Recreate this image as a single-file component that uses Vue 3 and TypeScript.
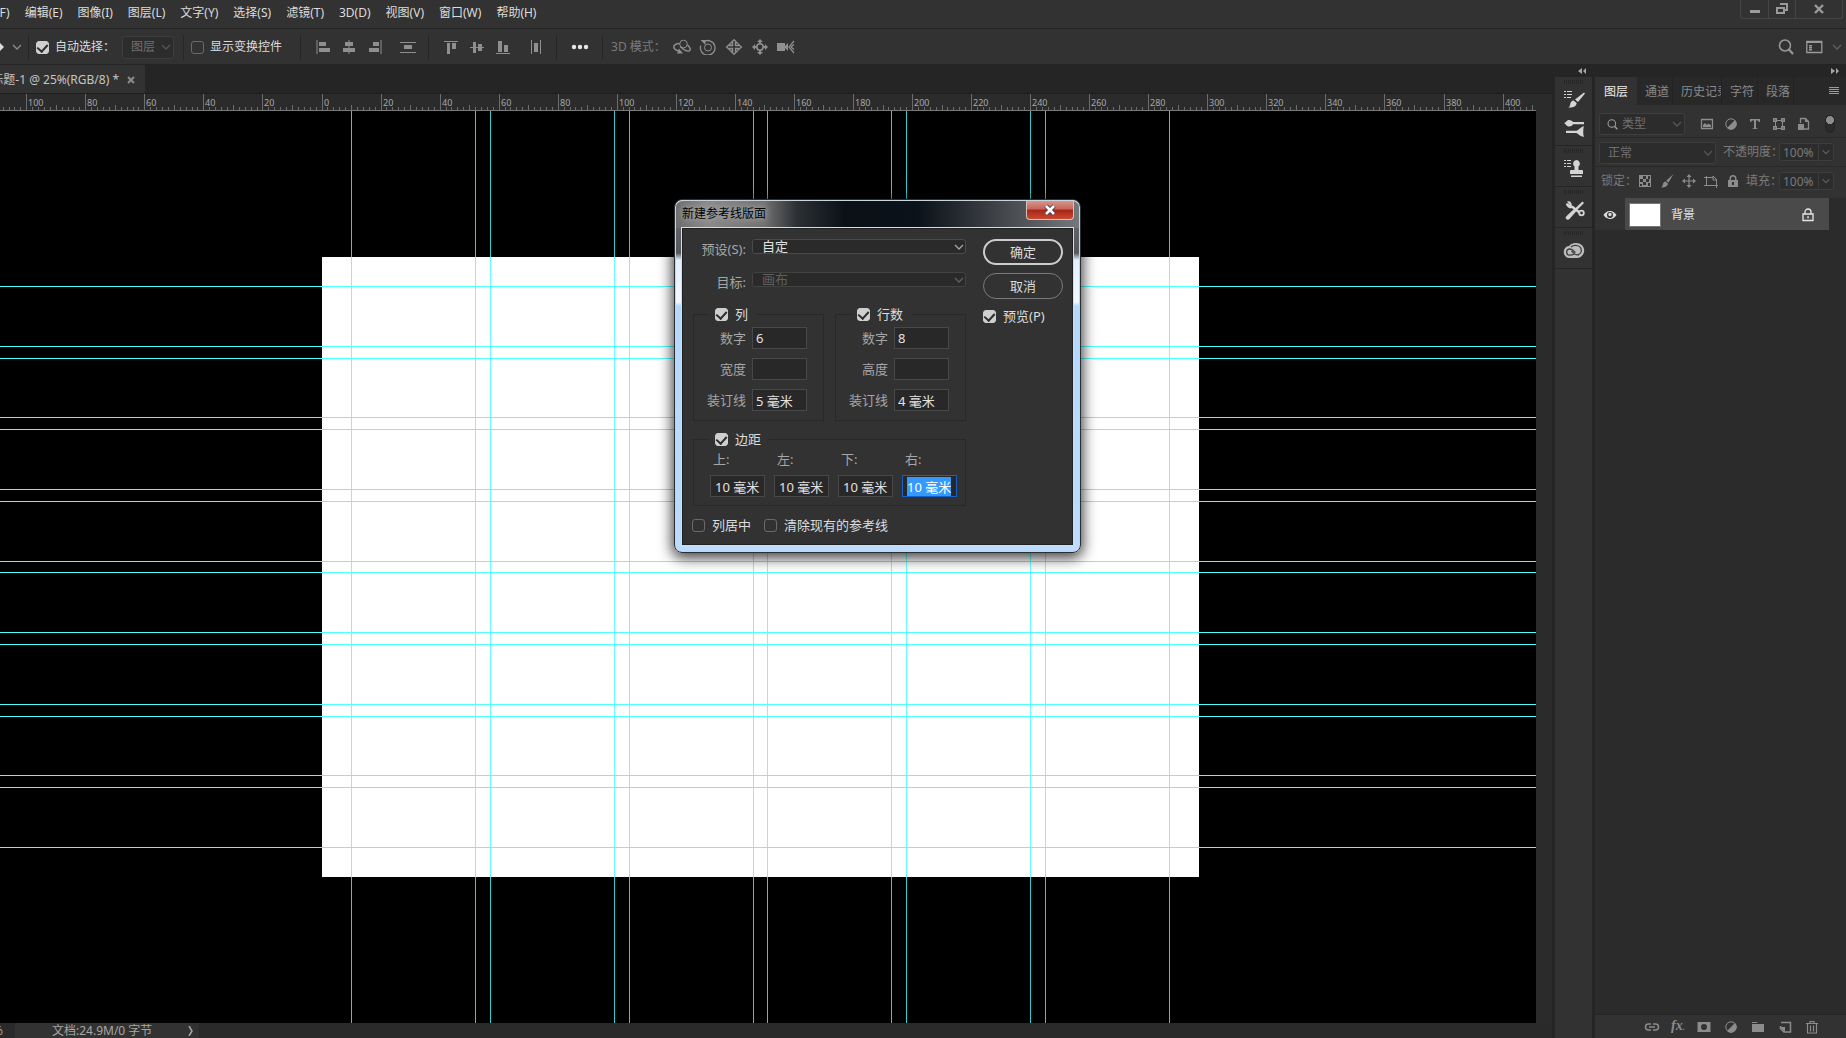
<script setup lang="ts">
import { onMounted, ref } from 'vue'

const menus: string[] = [
  '(F)', '编辑(E)', '图像(I)', '图层(L)', '文字(Y)', '选择(S)',
  '滤镜(T)', '3D(D)', '视图(V)', '窗口(W)', '帮助(H)',
]

// Document geometry: an A4 landscape sheet at 25% zoom, 300 dpi
const pxPerMm = (300 / 25.4) * 0.25
const sheet = { x: 322, y: 146, w: 877, h: 620 }

const toX = (mm: number): number => Math.floor(sheet.x + mm * pxPerMm)
const toY = (mm: number): number => Math.floor(sheet.y + mm * pxPerMm)

function spans(total: number, count: number, margin: number, gutter: number): number[] {
  const size = (total - margin * 2 - gutter * (count - 1)) / count
  const out: number[] = []
  for (let i = 0; i < count; i++) {
    const start = margin + i * (size + gutter)
    out.push(start, start + size)
  }
  return out
}

const columnGuides = spans(297, 6, 10, 5).map(toX)
const rowGuides = spans(210, 8, 10, 4).map(toY)

interface Tick { x: number; y: number; label: string | null }
const ticks: Tick[] = []
for (let mm = -108; mm <= 410; mm += 2) {
  const major = mm % 20 === 0
  ticks.push({
    x: toX(mm),
    y: major ? 0 : mm % 10 === 0 ? 11 : 13,
    label: major ? String(Math.abs(mm)) : null,
  })
}

const S = 'fill="none" stroke="currentColor"'
const icons: Record<string, string> = {
  left: '<path d="M2 1v14" stroke="currentColor"/><path d="M4 3h7v4H4zM4 9h11v4H4z"/>',
  hcenter: '<path d="M8 1v14" stroke="currentColor"/><path d="M4 3h8v4H4zM2 9h12v4H2z"/>',
  right: '<path d="M14 1v14" stroke="currentColor"/><path d="M6 3h6v4H6zM2 9h10v4H2z"/>',
  vdist: '<path d="M0 3.500h16M0 13.500h16" stroke="currentColor"/><path d="M4 6h8v4H4z"/>',
  top: '<path d="M1 2.500h14" stroke="currentColor"/><path d="M4 4h3v11H4zM9 4h4v6H9z"/>',
  vmiddle: '<path d="M1 8.500h14" stroke="currentColor"/><path d="M4 3h3v11H4zM9 5h4v7H9z"/>',
  bottom: '<path d="M1 14.500h14" stroke="currentColor"/><path d="M3 2h4v11H3zM9 6h4v7H9z"/>',
  hdist: '<path d="M3.500 1v14M12.500 1v14" stroke="currentColor"/><path d="M6 4h4v9H6z"/>',
  orbit: `<circle cx="10.500" cy="5" r="3.800" ${S}/><path d="M6.500 4.500C3 4.500 .5 6 .8 8.200c.3 2 2.500 3.300 5 3.900M14.500 6c2.500 2 3.500 4.500 2 5.700-1.200.9-3 .4-5.500-1L7 7.500" ${S} stroke-width="1.500"/><path d="M4 14.500l2-5 4 5z"/>`,
  roll: `<circle cx="9" cy="8.500" r="3.500" ${S}/><path d="M5 2.600a7.300 7.300 0 1 1-3.200 4" ${S} stroke-width="1.300"/><path d="M1.500 1h5v5z"/>`,
  pan: `<path d="M9 .8l3 3h-1.500v2.700h2.700V5l3.200 3-3.200 3V9.500h-2.700v2.700H12l-3 3-3-3h1.500V9.500H4.800V11L1.600 8l3.200-3v1.500h2.700V3.800H6z" ${S} stroke-width="1.400"/>`,
  slide: `<circle cx="9" cy="8" r="3.200" ${S} stroke-width="1.600"/><path d="M9 0l3 3h-2v2H8V3H6zM9 16l3-3h-2v-2H8v2H6zM1 8l3-3v2h2v2H4v2zM17 8l-3-3v2h-2v2h2v2z"/>`,
  camera: `<path d="M0 4h8v8H0zM7 8l4-4v8z"/><path d="M17 2l-5 6 5 6M14 8l3-2.500M14 8l3 2.500" ${S} stroke-width="1.200"/>`,
  search: `<circle cx="7" cy="6.500" r="5.500" ${S} stroke-width="1.500"/><path d="M11 10.500l4 4.500" ${S} stroke-width="2"/>`,
  layout: `<path d="M.8 2.500h15v11H.8z" ${S} stroke-width="1.300"/><path d="M.5 2h15.500v2H.5zM3 6h3v1.500H3zM3 8h3v1.500H3zM3 10h3v1.500H3z"/>`,
  chevron: `<path d="M1 3l4 4 4-4" ${S} stroke-width="1.300"/>`,
  brush: '<path d="M1 1h2v1H1zM4 1h5v1H4zM1 4h2v1H1zM4 4h5v1H4zM1 7h2v1H1zM4 7h4v1H4z"/><path d="M21 2.500l1 1-7 8.500-3-2.500zM10.500 10.500l3.200 2.500c-.5 3.800-4.200 5-8.500 4.500 2-1 1.700-2.500 2.200-4 .4-1.600 1.600-3 3.100-3z"/>',
  brushes: '<path d="M1 5c2-.2 2.500-3 5-3 2 0 3.500 1 4 2h11v2.200H10c-.7 1.300-2 2.300-4 2.300C3.500 8.500 3 6 1 5zM3 12.800h10.500c2-1 3.500-3 7.500-4.800-1 2-1 9.500 0 11-4-.8-5.500-2.700-7.500-4H3z"/>',
  stamp: '<path d="M1 1h2v1H1zM4 1h4v1H4zM1 4h2v1H1zM4 4h4v1H4zM1 7h2v1H1zM4 7h4v1H4z"/><path d="M13.500 1a3.500 3.500 0 0 1 2 6.300V11H19q1 0 1 1v3H7v-3q0-1 1-1h3.500V7.300a3.500 3.500 0 0 1 2-6.300zM8 16.500h11V18H8z"/>',
  tools: '<path d="M19.500 1.500L21 3l-7.500 7.500-2-1.500zM11 9l2.500 2-7 8c-1 1-2.500.8-3.300 0-.9-.9-.6-2 .2-2.800z"/><path d="M2 3l3 2.500 1.500-1.300L4 1.500c3-1 5 1 4.600 3.700l6 5" /><path d="M4 3.500c1 3 3 4 5.500 3.500l7 5.500" fill="none" stroke="currentColor" stroke-width="2.400"/><circle cx="18.500" cy="13" r="2.300" fill="none" stroke="currentColor" stroke-width="1.800"/>',
  cloud: `<path d="M6 5C7.500 3 10 2 13 2c4.700 0 8.200 3.200 8.200 7.300S18 17 14 17H6.500C3.200 17 .8 14.400 .8 11S3 5.300 6 5z" fill="#bcbcbc"/><path d="M16 13.800H14c-1.800 0-2.800-.8-4-2.200L8.500 10" fill="none" stroke="#3c3c3c" stroke-width="1.200"/><path d="M11 13c-1 .8-2 1.200-4 1.200-2 0-3.300-1.300-3.300-3.200S5 8 7 8c1.800 0 2.700.8 4 2.300l1.300 1.500M8 6c1-1 2.500-1.600 4.500-1.600 3.500 0 5.800 2.200 5.800 5 0 2.500-1.800 4-3.500 4" fill="none" stroke="#3c3c3c" stroke-width="1.300"/>`,
  image: `<path d="M2.500 3.500h11v9h-11z" ${S} stroke-width="1.300"/><path d="M4 11V9l2-2 2 2 1-1.500L12 9v2z"/>`,
  adjust: `<circle cx="8" cy="8" r="5.200" ${S}/><path d="M12 4A5.500 5.500 0 0 1 4 12z"/>`,
  type: '<path d="M3 3h10v3h-1l-1-1.500H9V12l1.500.5v.5h-5v-.5L7 12V4.500H5L4 6H3z"/>',
  shape: `<path d="M4 4.500h8M4 12.500h8M4.500 4v8M11.500 4v8" ${S}/><path d="M2 2h4v4H2zM10 2h4v4h-4zM2 10h4v4H2zM10 10h4v4h-4z"/><path d="M3.500 3.500h1v1h-1zM11.500 3.500h1v1h-1zM3.500 11.500h1v1h-1zM11.500 11.500h1v1h-1z" fill="#323232"/>`,
  smart: `<path d="M5.500 7V2.500h5l3 3v7.500H9" ${S} stroke-width="1.300"/><path d="M10 2v4h4zM3 8h6v6H3z"/>`,
  checker: '<path d="M2 2h12v12H2z"/><path d="M6 3h3v3H6zM11 3h2v3h-2zM3 6h3v3H3zM9 6h3v3H9zM6 9h3v3H6zM3 11h2v2H3zM11 10h2v3h-2z" fill="#323232"/>',
  paint: '<path d="M14.500 1l-5 8.500-2.300-1.800zM6.500 8.500L9 10.500c-.5 3-3 4-7 4 1.800-1 1.600-2.500 2-3.800.4-1.200 1.300-2 2.500-2.200z"/>',
  move: `<path d="M8 2v12M2 8h12" ${S} stroke-width="1.200"/><path d="M8 1l2.500 3h-5zM8 15l2.500-3h-5zM1 8l3-2.500v5zM15 8l-3-2.500v5z"/>`,
  crop: `<path d="M1 4.500h9M3.500 3v10M1 12.500h14M13.500 7v8M10 3v4h4zl4 4" ${S}/>`,
  lock: '<path d="M3 7h1.500V5.500a3.500 3.500 0 0 1 7 0V7H13v7H3zM6 7h4V5.500a2 2 0 0 0-4 0z" fill-rule="evenodd"/><path d="M7 9h2v3H7z" fill="#323232"/>',
  lockLine: `<path d="M3 7h10v6.500H3zM5 7V5a3 3 0 0 1 6 0v2" ${S} stroke-width="1.300"/><path d="M7.300 9.300h1.500v2H7.300z"/>`,
  eye: '<path d="M1.500 8C4 4.500 6 4 8 4s4 .5 6.500 4C12 11.500 10 12 8 12s-4-.5-6.500-4zM8 5a3 3 0 1 0 0 6 3 3 0 0 0 0-6z" fill-rule="evenodd"/><circle cx="8" cy="7.500" r="1.700"/>',
  link: `<path d="M7 5H4.500a3 3 0 0 0 0 6H7M9 5h2.500a3 3 0 0 1 0 6H9M5 8h6" ${S} stroke-width="1.500"/>`,
  mask: '<path d="M1.500 3h13v10h-13zM8 5a3 3 0 1 0 0 6 3 3 0 0 0 0-6z" fill-rule="evenodd"/>',
  folder: '<path d="M2 3h5l1 1.500h6V13H2z"/><path d="M2 4.500h12" stroke="#323232"/>',
  page: `<path d="M4 3.500h9.500V13H7L3.500 9.500V7" ${S} stroke-width="1.500"/><path d="M3 8h5v5z"/>`,
  trash: `<path d="M3.500 5v9h9V5M2 4.500h12M6 4V2.500h4V4M6.500 6.500v6M9.500 6.500v6" ${S} stroke-width="1.200"/>`,
  burger: '<path d="M1 1h10v1H1zM1 3h10v1H1zM1 5h10v1H1zM1 7h10v1H1z"/>',
  collapse: '<path d="M4 0v6L0 3zM8 0v6L5 3z"/>',
  expand: '<path d="M0 0v6l4-3zM5 0v6l3-3z"/>',
}

const alignA = ['left', 'hcenter', 'right']
const alignB = ['top', 'vmiddle', 'bottom']
const modes3d = ['orbit', 'roll', 'pan', 'slide', 'camera']
const filterKinds = ['image', 'adjust', 'type', 'shape', 'smart']
const lockKinds = ['checker', 'paint', 'move', 'crop', 'lock']

const dockGroups: string[][] = [['brush', 'brushes'], ['stamp'], ['tools'], ['cloud']]
const panelTabs = ['图层', '通道', '历史记录', '字符', '段落']

interface Group { title: string; rows: { label: string; value: string }[] }
const groups: Group[] = [
  { title: '列', rows: [{ label: '数字', value: '6' }, { label: '宽度', value: '' }, { label: '装订线', value: '5 毫米' }] },
  { title: '行数', rows: [{ label: '数字', value: '8' }, { label: '高度', value: '' }, { label: '装订线', value: '4 毫米' }] },
]
const margins = ['上:', '左:', '下:', '右:']
const marginInputs = ref<HTMLInputElement[]>([])

onMounted(() => {
  const last = marginInputs.value[margins.length - 1]
  last.focus()
  last.select()
})
</script>

<template>
  <div class="app">
    <header class="menubar">
      <nav class="menus">
        <button v-for="m in menus" :key="m" type="button">{{ m }}</button>
      </nav>
      <div class="winbtns">
        <button type="button" aria-label="最小化"><svg width="12" height="12" viewBox="0 0 12 12"><path d="M1 7h10v3H1z" /></svg></button>
        <button type="button" aria-label="还原"><svg width="14" height="12" viewBox="0 0 14 12"><path d="M5 1h7v6H9M2 5h7v5H2z" fill="none" stroke="currentColor" stroke-width="2" /></svg></button>
        <button type="button" class="wide" aria-label="关闭"><svg width="12" height="12" viewBox="0 0 12 12"><path d="M2 2l8 8M10 2l-8 8" stroke="currentColor" stroke-width="2.400" /></svg></button>
      </div>
    </header>

    <div class="options">
      <svg class="movetip" width="4" height="10" viewBox="0 0 4 10"><path d="M0 1l4 4-4 4z" /></svg>
      <svg class="chev" width="10" height="10" viewBox="0 0 10 10" v-html="icons.chevron" />
      <i class="sep" />
      <label class="check"><input type="checkbox" checked />自动选择：</label>
      <span class="pick pick-layer">
        <select aria-label="自动选择对象" disabled><option>图层</option></select>
        <svg width="10" height="10" viewBox="0 0 10 10" v-html="icons.chevron" />
      </span>
      <i class="sep" />
      <label class="check show-box"><input type="checkbox" />显示变换控件</label>
      <i class="sep" />
      <div class="icons">
        <svg v-for="n in alignA" :key="n" width="16" height="16" viewBox="0 0 16 16" v-html="icons[n]" />
      </div>
      <svg class="dist" width="16" height="16" viewBox="0 0 16 16" v-html="icons.vdist" />
      <i class="sep" />
      <div class="icons">
        <svg v-for="n in alignB" :key="n" width="16" height="16" viewBox="0 0 16 16" v-html="icons[n]" />
      </div>
      <svg class="dist" width="16" height="16" viewBox="0 0 16 16" v-html="icons.hdist" />
      <i class="sep" />
      <svg class="dots" width="18" height="6" viewBox="0 0 18 6"><circle cx="3" cy="3" r="2.200" /><circle cx="9" cy="3" r="2.200" /><circle cx="15" cy="3" r="2.200" /></svg>
      <i class="sep" />
      <span class="dim">3D 模式：</span>
      <div class="icons modes">
        <svg v-for="n in modes3d" :key="n" width="18" height="16" viewBox="0 0 18 16" v-html="icons[n]" />
      </div>
      <div class="opt-right">
        <svg width="16" height="16" viewBox="0 0 16 16" v-html="icons.search" />
        <svg width="17" height="16" viewBox="0 0 17 16" v-html="icons.layout" />
        <svg class="faint" width="10" height="10" viewBox="0 0 10 10" v-html="icons.chevron" />
      </div>
    </div>

    <main class="work">
      <section class="doc">
        <div class="doctabs">
          <div class="doctab">
            <span>标题-1 @ 25%(RGB/8) *</span>
            <button type="button" aria-label="关闭文档"><svg width="8" height="8" viewBox="0 0 8 8"><path d="M1 1l6 6M7 1L1 7" stroke="currentColor" stroke-width="2" /></svg></button>
          </div>
        </div>
        <div class="docbody">
          <div class="view">
            <svg class="ruler" width="100%" height="17" shape-rendering="crispEdges">
              <g v-for="t in ticks" :key="t.x">
                <rect :x="t.x" :y="t.y" width="1" :height="16 - t.y" />
                <text v-if="t.label !== null" :x="t.x + 2" y="12">{{ t.label }}</text>
              </g>
              <rect class="rline" x="0" y="16" width="100%" height="1" />
            </svg>
            <svg class="stage" width="100%" shape-rendering="crispEdges">
              <rect v-for="x in columnGuides" :key="'b' + x" :x="x" y="0" width="1" height="100%" fill="#33cccc" />
              <rect :x="sheet.x" :y="sheet.y" :width="sheet.w" :height="sheet.h" fill="#ffffff" />
              <rect v-for="x in columnGuides" :key="'w' + x" :x="x" :y="sheet.y" width="1" :height="sheet.h" fill="#66ffff" />
              <rect v-for="y in rowGuides" :key="'r' + y" x="0" :y="y" width="100%" height="1" fill="#4dffff" />
            </svg>
          </div>
          <div class="track" />
        </div>
        <footer class="status">
          <span class="zoom">%</span>
          <span class="info"><span>文档:24.9M/0 字节</span><svg width="6" height="10" viewBox="0 0 6 10"><path d="M1 0l3 5-3 5" fill="none" stroke="currentColor" stroke-width="1.500" /></svg></span>
        </footer>
      </section>

      <aside class="dock">
        <div class="dockhead"><svg width="8" height="6" viewBox="0 0 8 6" v-html="icons.collapse" /></div>
        <div v-for="(g, i) in dockGroups" :key="i" class="dockgroup">
          <i class="grip" />
          <button v-for="n in g" :key="n" type="button" :aria-label="n"><svg width="22" height="20" viewBox="0 0 22 20" v-html="icons[n]" /></button>
        </div>
        <div class="dockrest" />
      </aside>

      <aside class="panel">
        <div class="dockhead"><svg width="8" height="6" viewBox="0 0 8 6" v-html="icons.expand" /></div>
        <div class="tabs">
          <button v-for="(t, i) in panelTabs" :key="t" type="button" :class="['tab', { on: i === 0, long: t.length > 2 }]">{{ t }}</button>
          <svg class="burger" width="12" height="10" viewBox="0 0 12 10" v-html="icons.burger" />
        </div>
        <div class="prow filter">
          <span class="pick pick-kind">
            <svg class="lens" width="11" height="11" viewBox="0 0 16 16" v-html="icons.search" />
            <select aria-label="类型" disabled><option>类型</option></select>
            <svg width="10" height="10" viewBox="0 0 10 10" v-html="icons.chevron" />
          </span>
          <div class="picons kinds">
            <svg v-for="n in filterKinds" :key="n" width="16" height="16" viewBox="0 0 16 16" v-html="icons[n]" />
          </div>
          <span class="toggle" />
        </div>
        <div class="prow">
          <span class="pick pick-mode">
            <select aria-label="混合模式" disabled><option>正常</option></select>
            <svg width="10" height="10" viewBox="0 0 10 10" v-html="icons.chevron" />
          </span>
          <label class="amount"><span class="w4">不透明度：</span><input type="text" value="100%" disabled /><svg width="14" height="10" viewBox="-2 0 14 10" v-html="icons.chevron" /></label>
        </div>
        <div class="prow last">
          <span class="locktext">锁定：</span>
          <div class="picons locks">
            <svg v-for="n in lockKinds" :key="n" width="16" height="16" viewBox="0 0 16 16" v-html="icons[n]" />
          </div>
          <label class="amount"><span class="w2">填充：</span><input type="text" value="100%" disabled /><svg width="14" height="10" viewBox="-2 0 14 10" v-html="icons.chevron" /></label>
        </div>
        <div class="layers">
          <div class="layer">
            <span class="eye"><svg width="16" height="16" viewBox="0 0 16 16" v-html="icons.eye" /></span>
            <div class="layerbody">
              <span class="thumb" />
              <span>背景</span>
              <svg width="16" height="16" viewBox="0 0 16 16" v-html="icons.lockLine" />
            </div>
          </div>
        </div>
        <div class="pfoot">
          <svg width="16" height="16" viewBox="0 0 16 16" v-html="icons.link" />
          <span class="fx">fx<small>.</small></span>
          <svg width="16" height="16" viewBox="0 0 16 16" v-html="icons.mask" />
          <svg width="16" height="16" viewBox="0 0 16 16" v-html="icons.adjust" />
          <svg width="16" height="16" viewBox="0 0 16 16" v-html="icons.folder" />
          <svg width="16" height="16" viewBox="0 0 16 16" v-html="icons.page" />
          <svg width="16" height="16" viewBox="0 0 16 16" v-html="icons.trash" />
        </div>
      </aside>
    </main>

    <div class="dialog" role="dialog" aria-labelledby="dlg-title">
      <div class="titlebar">
        <span id="dlg-title">新建参考线版面</span>
        <button type="button" aria-label="关闭"><svg width="14" height="12" viewBox="0 0 14 12"><path d="M3 2l8 8M11 2l-8 8" stroke="#4a3a4a" stroke-width="4.500" /><path d="M3 2l8 8M11 2l-8 8" stroke="#ffffff" stroke-width="2.600" /></svg></button>
      </div>
      <form class="dbody" @submit.prevent>
        <div class="main">
          <div class="drow">
            <label for="preset">预设(S):</label>
            <span class="dpick">
              <select id="preset"><option>自定</option></select>
              <svg width="10" height="10" viewBox="0 0 10 10" v-html="icons.chevron" />
            </span>
          </div>
          <div class="drow">
            <label for="target">目标:</label>
            <span class="dpick off">
              <select id="target" disabled><option>画布</option></select>
              <svg width="10" height="10" viewBox="0 0 10 10" v-html="icons.chevron" />
            </span>
          </div>
          <div class="groups">
            <fieldset v-for="g in groups" :key="g.title">
              <legend><label class="check"><input type="checkbox" checked />{{ g.title }}</label></legend>
              <label v-for="r in g.rows" :key="r.label" class="field"><span>{{ r.label }}</span><input type="text" :value="r.value" /></label>
            </fieldset>
          </div>
          <fieldset class="margins">
            <legend><label class="check"><input type="checkbox" checked />边距</label></legend>
            <div class="cells">
              <label v-for="m in margins" :key="m"><span>{{ m }}</span><input ref="marginInputs" type="text" value="10 毫米" /></label>
            </div>
          </fieldset>
          <div class="extras">
            <label class="check"><input type="checkbox" />列居中</label>
            <label class="check"><input type="checkbox" />清除现有的参考线</label>
          </div>
        </div>
        <div class="side">
          <button type="submit" class="ok">确定</button>
          <button type="button">取消</button>
          <label class="check"><input type="checkbox" checked />预览(P)</label>
        </div>
      </form>
    </div>
  </div>
</template>

<style>
body {
  margin: 0;
  background: #323232;
}
</style>

<style scoped>
.app,
.app * {
  box-sizing: border-box;
}
.app {
  position: relative;
  display: flex;
  flex-direction: column;
  height: 100vh;
  overflow: hidden;
  background: #323232;
  color: #dcdcdc;
  font: 12px/16px "Noto Sans", "Noto Sans CJK SC", sans-serif;
}
button,
input,
select {
  margin: 0;
  padding: 0;
  border: 0;
  background: none;
  color: inherit;
  font: inherit;
}
svg {
  flex: none;
  fill: currentColor;
}
select {
  appearance: none;
  opacity: 1;
  outline: none;
}
input {
  outline: none;
}

/* Menu bar */
.menubar {
  display: flex;
  justify-content: space-between;
  height: 29px;
  border-bottom: 1px solid #242424;
}
.menus {
  display: flex;
  gap: 15px;
  align-items: center;
  padding-bottom: 2px;
  margin-left: -4px;
}
.menus button {
  white-space: nowrap;
}
.winbtns {
  display: flex;
  height: 19px;
  margin-right: 3px;
  border: 1px solid #454545;
  border-top: 0;
  border-radius: 0 0 3px 3px;
  color: #9a9a9a;
}
.winbtns button {
  display: flex;
  align-items: center;
  justify-content: center;
  width: 27px;
}
.winbtns button + button {
  border-left: 1px solid #454545;
}
.winbtns .wide {
  width: 47px;
}

/* Checkboxes */
.check {
  display: flex;
  align-items: center;
  gap: 7px;
  white-space: nowrap;
}
.check input {
  appearance: none;
  flex: none;
  display: flex;
  justify-content: center;
  width: 13px;
  height: 13px;
  border: 1px solid #6a6a6a;
  border-radius: 3px;
}
.check input:checked {
  border-color: #cfcfcf;
  background: #cfcfcf;
}
.check input:checked::before {
  content: "";
  width: 5px;
  height: 8px;
  border: solid #2c2c2c;
  border-width: 0 2px 2px 0;
  transform: rotate(42deg);
}

/* Options bar */
.options {
  display: flex;
  align-items: center;
  height: 36px;
  padding-top: 1px;
  border-bottom: 1px solid #242424;
}
.movetip {
  margin-right: 8px;
}
.chev {
  margin-right: 6px;
  color: #8c8c8c;
}
.sep {
  flex: none;
  width: 1px;
  height: 25px;
  background: #262626;
}
.options .check {
  gap: 6px;
  margin-left: 7px;
}
.options .show-box {
  margin-right: 18px;
}
.pick {
  position: relative;
  display: flex;
  align-items: center;
  flex: none;
  border: 1px solid #3d3d3d;
  border-radius: 3px;
  background: #2c2c2c;
  color: #707070;
}
.pick select {
  flex: 1;
  width: 100%;
  height: 100%;
  padding-left: 8px;
}
.pick > svg:last-child {
  position: absolute;
  right: 2px;
  color: #565656;
}
.pick-layer {
  width: 52px;
  height: 23px;
  margin: 0 9px 0 7px;
}
.icons {
  display: flex;
  gap: 10px;
  margin-left: 14px;
  color: #8f8f8f;
}
.dist {
  margin: 0 12px 0 17px;
  color: #8f8f8f;
}
.dots {
  margin: 0 13px 0 14px;
  color: #e6e6e6;
}
.dim {
  margin-left: 8px;
  white-space: nowrap;
  color: #7a7a7a;
}
.modes {
  gap: 8px;
  margin-left: 7px;
}
.opt-right {
  display: flex;
  align-items: center;
  gap: 12px;
  margin-left: auto;
  padding-right: 4px;
  color: #9a9a9a;
}
.faint {
  margin-left: -3px;
  color: #606060;
}

/* Document */
.work {
  display: flex;
  flex: 1;
  min-height: 0;
  background: #252525;
}
.doc {
  display: flex;
  flex: 1;
  flex-direction: column;
  min-width: 0;
}
.doctabs {
  display: flex;
  height: 29px;
  border-bottom: 1px solid #1f1f1f;
}
.doctab {
  display: flex;
  align-items: center;
  justify-content: flex-end;
  gap: 8px;
  width: 145px;
  padding: 2px 10px 0 0;
  overflow: hidden;
  background: #323232;
  color: #c4c4c4;
}
.doctab span {
  flex: none;
  white-space: nowrap;
}
.doctab button {
  display: flex;
  color: #8c8c8c;
}
.docbody {
  display: flex;
  flex: 1;
  min-height: 0;
}
.view {
  display: flex;
  flex: 1;
  flex-direction: column;
  min-width: 0;
}
.ruler {
  display: block;
  background: #2b2b2b;
  color: #6c6c6c;
}
.ruler text {
  fill: #a8a8a8;
  font-size: 9px;
}
.ruler .rline {
  fill: #7a7a7a;
}
.stage {
  flex: 1;
  min-height: 0;
  background: #000000;
}
.track {
  width: 16px;
  background: #2b2b2b;
}
.status {
  display: flex;
  height: 15px;
  overflow: hidden;
  background: #2a2a2a;
  color: #a6a6a6;
}
.zoom {
  display: flex;
  justify-content: flex-end;
  width: 15px;
  padding-right: 12px;
  overflow: hidden;
}
.info {
  display: flex;
  align-items: center;
  justify-content: space-between;
  width: 184px;
  padding: 1px 5px 0 37px;
  background: #323232;
}

/* Collapsed icon dock */
.dock {
  display: flex;
  flex: none;
  flex-direction: column;
  width: 37px;
  margin: 0 3px;
}
.dockhead {
  display: flex;
  align-items: center;
  justify-content: flex-end;
  height: 12px;
  padding-right: 6px;
  color: #a6a6a6;
}
.dockgroup {
  display: flex;
  flex-direction: column;
  align-items: center;
  gap: 8px;
  margin-bottom: 1px;
  padding: 3px 0 7px;
  background: #323232;
  color: #d4d4d4;
}
.dockgroup button {
  display: flex;
}
.dockgroup .grip {
  width: 20px;
  height: 4px;
  margin-bottom: -2px;
  background: repeating-linear-gradient(90deg, #262626 0 1px, #323232 1px 2px);
}
.dockrest {
  flex: 1;
  background: #323232;
}

/* Layers panel */
.panel {
  display: flex;
  flex: none;
  flex-direction: column;
  width: 251px;
}
.panel .dockhead {
  padding-right: 7px;
}
.tabs {
  display: flex;
  height: 28px;
  background: #282828;
  color: #8a8a8a;
}
.tab {
  flex: none;
  padding: 1px 3px 0 8px;
  overflow: hidden;
  border-right: 1px solid #222222;
  text-align: left;
  white-space: nowrap;
}
.tab.long {
  width: 49px;
  padding-right: 0;
}
.tab.on {
  padding: 1px 9px 0 9px;
  border: 0;
  background: #323232;
  color: #ececec;
}
.burger {
  margin: 9px 6px 0 auto;
  color: #9a9a9a;
}
.prow {
  display: flex;
  align-items: center;
  justify-content: space-between;
  height: 29px;
  padding: 0 12px 0 4px;
  border-bottom: 1px solid #292929;
  background: #323232;
  color: #7a7a7a;
}
.prow.filter {
  height: 33px;
  padding: 6px 11px 0 4px;
}
.prow.last {
  height: 31px;
  padding-bottom: 3px;
  padding-left: 6px;
  border: 0;
}
.pick-kind {
  width: 86px;
  height: 22px;
  padding-left: 7px;
}
.lens {
  color: #a0a0a0;
}
.pick-kind select {
  padding-left: 4px;
}
.pick-mode {
  width: 117px;
  height: 22px;
  margin-top: 2px;
}
.picons {
  display: flex;
  color: #8c8c8c;
}
.kinds {
  gap: 8px;
}
.locks {
  gap: 6px;
  margin-left: -1px;
}
.toggle {
  width: 10px;
  height: 18px;
  border: 1px solid #242424;
  border-radius: 5px;
  background: radial-gradient(circle at 4px 4px, #8c8c8c 4px, #2a2a2a 4px);
}
.amount {
  display: flex;
  align-items: center;
}
.amount span {
  white-space: nowrap;
}
.amount .w4 {
  width: 56px;
}
.amount .w2 {
  width: 33px;
}
.locktext {
  width: 32px;
  white-space: nowrap;
}
.amount input {
  width: 40px;
  height: 18px;
  padding-left: 3px;
  border: 1px solid #3d3d3d;
  border-radius: 3px 0 0 3px;
  background: #2c2c2c;
}
.amount svg {
  width: 15px;
  height: 18px;
  padding: 0 1px;
  border: 1px solid #3d3d3d;
  border-left: 0;
  border-radius: 0 3px 3px 0;
  background: #2c2c2c;
  color: #606060;
}
.layers {
  flex: 1;
  background: #2b2b2b;
}
.layer {
  display: flex;
  margin-right: 17px;
}
.eye {
  display: flex;
  align-items: center;
  justify-content: center;
  width: 30px;
  padding-top: 1px;
  background: #323232;
}
.layerbody {
  display: flex;
  flex: 1;
  align-items: center;
  gap: 10px;
  height: 32px;
  padding: 1px 13px 0 4px;
  background: #4a4a4a;
  color: #e6e6e6;
}
.layerbody svg {
  margin-left: auto;
}
.thumb {
  width: 32px;
  height: 24px;
  border: 1px solid #777777;
  background: #ffffff;
}
.pfoot {
  display: flex;
  align-items: center;
  justify-content: flex-end;
  gap: 11px;
  height: 24px;
  padding-right: 26px;
  border-top: 1px solid #262626;
  background: #323232;
  color: #8c8c8c;
}
.fx {
  width: 14px;
  font: italic bold 14px/16px "Liberation Serif", serif;
}
.fx small {
  font-size: 8px;
}

/* Dialog window */
.dialog {
  position: absolute;
  top: 199px;
  left: 674px;
  width: 407px;
  padding: 0 7px 7px;
  border: 1px solid #2a2e33;
  border-radius: 8px;
  background: linear-gradient(180deg, #6a6f75 0, #55595f 53px, #e2effd 60px, #f2f8ff 102px, #b5d8fb 106px, #bbdcfc 100%);
  box-shadow: inset 0 0 0 1px #c8d4de, 0 3px 14px 2px rgba(0, 0, 0, 0.75);
  font-size: 13px;
}
.titlebar {
  display: flex;
  align-items: flex-start;
  justify-content: space-between;
  height: 28px;
  margin: 0 -6px;
  padding: 0 5px 0 6px;
  border-top: 1px solid #c8d4de;
  border-radius: 7px 7px 0 0;
  background: linear-gradient(90deg, #6c6c6c 0, #8a8a8a 8%, #707070 22%, #2c3034 30%, #0b1017 42%, #0b1219 60%, #3b3e43 78%, #74787d 100%);
}
.titlebar span {
  padding-top: 5px;
  color: #000000;
  font-size: 12px;
  text-shadow: 0 0 6px #b4b4b4, 0 0 10px #a8a8a8;
}
.titlebar button {
  display: flex;
  align-items: center;
  justify-content: center;
  width: 48px;
  height: 19px;
  border: 1px solid #d6c0bc;
  border-top: 0;
  border-radius: 0 0 4px 4px;
  background: linear-gradient(180deg, #d8968a 0, #c4665a 45%, #a82418 50%, #c64a30 100%);
}
.dbody {
  display: flex;
  gap: 17px;
  padding: 10px 9px 9px 10px;
  border: 1px solid #202020;
  outline: 1px solid #d4dde6;
  background: #323232;
}
.main {
  flex: 1;
  min-width: 0;
}
.drow {
  display: flex;
  align-items: flex-start;
  gap: 6px;
  height: 22px;
  margin-bottom: 11px;
  line-height: 20px;
  color: #a6a6a6;
}
.drow label {
  width: 53px;
  text-align: right;
  white-space: nowrap;
}
.dpick {
  position: relative;
  display: flex;
  flex: 1;
  align-items: center;
  height: 15px;
  border: 1px solid #4a4a4a;
  border-radius: 3px;
  background: #2a2a2a;
  color: #e2e2e2;
}
.dpick select {
  flex: 1;
  height: 13px;
  padding-left: 9px;
  line-height: 13px;
}
.dpick svg {
  position: absolute;
  right: 1px;
  color: #a6a6a6;
}
.dpick.off,
.dpick.off svg {
  border-color: #424242;
  color: #606060;
}
.groups {
  display: grid;
  grid-template-columns: 1fr 1fr;
  gap: 11px;
  margin-bottom: 8px;
}
fieldset {
  min-width: 0;
  margin: 0;
  padding: 3px 0 9px;
  border: 1px solid #282828;
}
.drow + .groups {
  margin-top: -1px;
}
legend {
  height: 20px;
  margin-left: 15px;
  padding: 0 8px 0 6px;
  line-height: 20px;
}
.field {
  display: flex;
  align-items: center;
  gap: 6px;
  height: 22px;
  color: #a6a6a6;
}
.field + .field {
  margin-top: 9px;
}
.field span {
  width: 52px;
  text-align: right;
}
.field input,
.cells input {
  width: 55px;
  height: 22px;
  padding: 0 3px;
  border: 1px solid #484848;
  background: #282828;
  color: #e2e2e2;
}
.margins {
  padding: 0 0 8px;
}
.cells {
  display: flex;
  gap: 9px;
  padding-left: 16px;
  color: #a6a6a6;
}
.cells label {
  display: flex;
  flex-direction: column;
  gap: 6px;
}
.cells span {
  padding-left: 3px;
  line-height: 20px;
}
.cells input {
  padding: 0 4px;
}
.cells input:focus {
  border-color: #1462c8;
}
.cells input::selection {
  background: #3399ff;
  color: #ffffff;
}
.extras {
  display: flex;
  gap: 13px;
  height: 20px;
  margin-top: 9px;
  margin-left: -1px;
}
.side {
  display: flex;
  flex: none;
  flex-direction: column;
  gap: 8px;
  width: 80px;
}
.side button {
  height: 26px;
  border: 1px solid #7a7a7a;
  border-radius: 13px;
}
.side .ok {
  border: 2px solid #cccccc;
}
.side .check {
  height: 18px;
}
</style>
